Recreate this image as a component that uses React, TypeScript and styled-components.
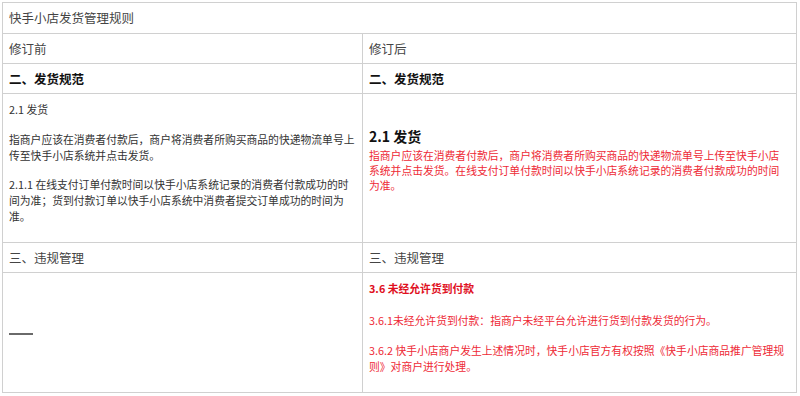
import React from 'react';
import styled, {createGlobalStyle, css} from "styled-components";

const GlobalStyle = createGlobalStyle`
    html, body {
        margin: 0;
        padding: 0;
        background: #fff;
    }

    body {
        font-family: "Noto Sans CJK SC", "Noto Sans", sans-serif;
        color: #333;
    }
`;

const App: React.FC = () => {
    return (
        <>
            <GlobalStyle/>
            <Page>
                <Table>
                    <colgroup>
                        <col style={{width: 360}}/>
                        <col/>
                    </colgroup>
                    <tbody>
                    <Row $height={31}>
                        <Cell colSpan={2}>
                            <Caption>快手小店发货管理规则</Caption>
                        </Cell>
                    </Row>
                    <Row $height={30}>
                        <Cell><Caption>修订前</Caption></Cell>
                        <Cell><Caption>修订后</Caption></Cell>
                    </Row>
                    <Row $height={30}>
                        <Cell><Section>二、发货规范</Section></Cell>
                        <Cell><Section>二、发货规范</Section></Cell>
                    </Row>
                    <Row $height={149}>
                        <Cell $pad="7px 5px 6px 6px">
                            <Para>2.1 发货</Para>
                            <Para $gap={14}>指商户应该在消费者付款后，商户将消费者所购买商品的快递物流单号上传至快手小店系统并点击发货。</Para>
                            <Para $gap={13}>2.1.1 在线支付订单付款时间以快手小店系统记录的消费者付款成功的时间为准；货到付款订单以快手小店系统中消费者提交订单成功的时间为准。</Para>
                        </Cell>
                        <Cell $pad="32px 6px 6px">
                            <SubHeading>2.1 发货</SubHeading>
                            <Para $red $tight>指商户应该在消费者付款后，商户将消费者所购买商品的快递物流单号上传至快手小店系统并点击发货。在线支付订单付款时间以快手小店系统记录的消费者付款成功的时间为准。</Para>
                        </Cell>
                    </Row>
                    <Row $height={30}>
                        <Cell><Caption>三、违规管理</Caption></Cell>
                        <Cell><Caption>三、违规管理</Caption></Cell>
                    </Row>
                    <Row $height={120}>
                        <Cell $middle>
                            <Dash/>
                        </Cell>
                        <Cell $pad="7px 6px 6px">
                            <Para $red $bold>3.6 未经允许货到付款</Para>
                            <Para $red $gap={16}>3.6.1未经允许货到付款：指商户未经平台允许进行货到付款发货的行为。</Para>
                            <Para $red $gap={14}>3.6.2 快手小店商户发生上述情况时，快手小店官方有权按照《快手小店商品推广管理规<br/>则》对商户进行处理。</Para>
                        </Cell>
                    </Row>
                    </tbody>
                </Table>
            </Page>
        </>
    );
}

export default App;

const Page = styled.div`
    padding: 2px 3px 0 2px;
    width: 800px;
    height: 396px;
    box-sizing: border-box;
`;

const Table = styled.table`
    width: 100%;
    border-collapse: collapse;
    table-layout: fixed;
`;

const Row = styled.tr<{ $height: number }>`
    height: ${props => props.$height}px;
`;

const Cell = styled.td<{ $pad?: string, $middle?: boolean }>`
    border: 1px solid #d0d0d0;
    padding: ${props => props.$pad ?? '0 6px'};
    vertical-align: ${props => props.$middle ? 'middle' : 'top'};
    box-sizing: border-box;

    ${props => !props.$pad && css`
        vertical-align: middle;
    `}
`;

const Caption = styled.div`
    font-size: 12.5px;
    line-height: 18px;
    color: #444;
`;

const Section = styled.div`
    font-size: 12.5px;
    line-height: 18px;
    font-weight: bold;
    color: #111;
`;

const SubHeading = styled.div`
    font-size: 14px;
    line-height: 20px;
    font-weight: bold;
    color: #111;
    margin-bottom: 2px;
`;

const Para = styled.p<{ $red?: boolean, $bold?: boolean, $gap?: number, $tight?: boolean }>`
    margin: ${props => props.$gap ?? 0}px 0 0;
    font-size: 10.8px;
    line-height: ${props => props.$tight ? 15 : 16}px;
    color: ${props => props.$red ? '#ee2a36' : '#333'};
    font-weight: ${props => props.$bold ? 'bold' : 'normal'};
    word-break: break-all;

    ${props => props.$bold && props.$red && css`
        color: #e0101e;
    `}
`;

const Dash = styled.span`
    display: block;
    width: 24px;
    height: 0;
    border-top: 2px solid #6a6a6a;
    margin-top: 2px;
`;
